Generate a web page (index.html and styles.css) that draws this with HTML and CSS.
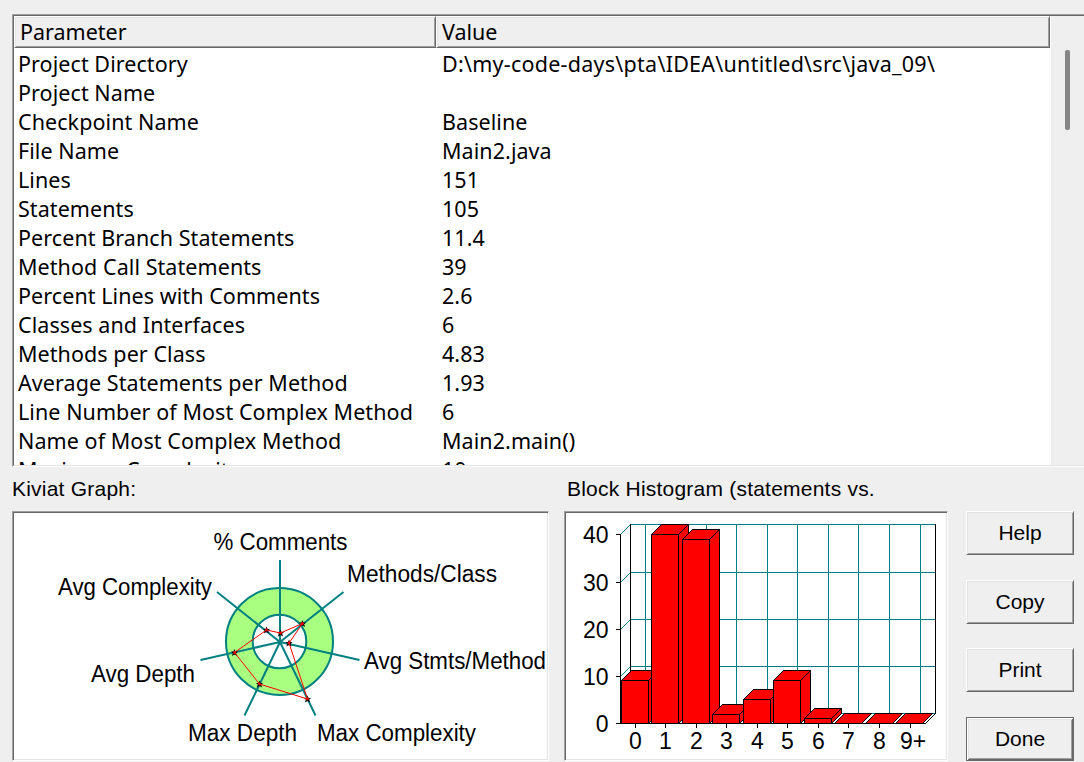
FILE: index.html
```
<!DOCTYPE html>
<html lang="en">
<head>
    <meta charset="UTF-8">
    <meta name="viewport" content="width=device-width, initial-scale=1.0">
    <title>Metrics Details</title>
    <link rel="stylesheet" href="styles.css">
</head>
<body>
    <div class="list">
        <div class="list-main">
            <div class="list-header">
                <div class="header-cell">Parameter</div>
                <div class="header-cell">Value</div>
            </div>
            <div class="rows">
                <div class="row"><span>Project Directory</span><span class="path">D:\my-code-days\pta\IDEA\untitled\src\java_09\</span></div>
                <div class="row"><span>Project Name</span><span></span></div>
                <div class="row"><span>Checkpoint Name</span><span>Baseline</span></div>
                <div class="row"><span>File Name</span><span>Main2.java</span></div>
                <div class="row"><span>Lines</span><span>151</span></div>
                <div class="row"><span>Statements</span><span>105</span></div>
                <div class="row"><span>Percent Branch Statements</span><span>11.4</span></div>
                <div class="row"><span>Method Call Statements</span><span>39</span></div>
                <div class="row"><span>Percent Lines with Comments</span><span>2.6</span></div>
                <div class="row"><span>Classes and Interfaces</span><span>6</span></div>
                <div class="row"><span>Methods per Class</span><span>4.83</span></div>
                <div class="row"><span>Average Statements per Method</span><span>1.93</span></div>
                <div class="row"><span>Line Number of Most Complex Method</span><span>6</span></div>
                <div class="row"><span>Name of Most Complex Method</span><span>Main2.main()</span></div>
                <div class="row"><span>Maximum Complexity</span><span>10</span></div>
            </div>
        </div>
        <div class="scrollbar"><div class="thumb"></div></div>
    </div>

    <div class="bottom">
        <div class="kiviat">
            <div class="label">Kiviat Graph:</div>
            <div class="panel">
                <svg viewBox="14 513 533 246" width="533" height="246">
                    <!-- target band -->
                    <circle class="band" cx="279.5" cy="641.5" r="53.5"/>
                    <circle class="hole" cx="279.5" cy="641.5" r="26.8"/>
                    <path class="spokes" d="M280 642V560M280 642L343.5 592M280 642L359.5 660M280 642L315.5 715.5M280 642L244.5 715.5M280 642L200.5 660M280 642L217 592"/>
                    <defs>
                        <g id="star">
                            <path d="M0 -3.5L1 -1H3.5L1.6 .8L2.7 3.5L0 2L-2.7 3.5L-1.6 .8L-3.5 -1H-1Z" fill="#000"/>
                            <circle r="1.4" fill="#e00000"/>
                        </g>
                    </defs>
                    <use href="#star" x="280.5" y="633"/>
                    <use href="#star" x="302.5" y="623.5"/>
                    <use href="#star" x="289" y="643"/>
                    <use href="#star" x="307.5" y="699"/>
                    <use href="#star" x="259.5" y="684"/>
                    <use href="#star" x="234.5" y="652.5"/>
                    <use href="#star" x="266.5" y="630"/>
                    <path class="values" d="M280.5 633L302.5 623.5L289 643L307.5 699L259.5 684L234.5 652.5L266.5 630Z"/>
                    <text x="213.5" y="550" textLength="134" lengthAdjust="spacingAndGlyphs">% Comments</text>
                    <text x="347" y="582" textLength="150" lengthAdjust="spacingAndGlyphs">Methods/Class</text>
                    <text x="364" y="669" textLength="182" lengthAdjust="spacingAndGlyphs">Avg Stmts/Method</text>
                    <text x="317" y="741" textLength="159" lengthAdjust="spacingAndGlyphs">Max Complexity</text>
                    <text x="188" y="741" textLength="109" lengthAdjust="spacingAndGlyphs">Max Depth</text>
                    <text x="91" y="682" textLength="104" lengthAdjust="spacingAndGlyphs">Avg Depth</text>
                    <text x="58" y="595" textLength="154" lengthAdjust="spacingAndGlyphs">Avg Complexity</text>
                </svg>
            </div>
        </div>

        <div class="histogram">
            <div class="label">Block Histogram (statements vs.</div>
            <div class="panel">
                <svg viewBox="566 513 379 246" width="379" height="246">
                    <g class="grid">
                        <path d="M630.5 524.5H935M630.5 572.5H935M630.5 619.5H935M630.5 666.5H935M630.5 713.5H935"/>
                        <path d="M645.5 524V713M676.5 524V713M706.5 524V713M736.5 524V713M767.5 524V713M797.5 524V713M828.5 524V713M858.5 524V713M889.5 524V713M920.5 524V713"/>
                        <path d="M620.5 534.5l10 -10M620.5 582.5l10 -10M620.5 629.5l10 -10M620.5 676.5l10 -10"/>
                    </g>
                    <path class="axis" d="M620.5 534V724M630.5 524V713M935.5 524V714M925.5 723.5L935.5 713.5"/>
                    <!-- one block per nesting depth -->
                    <g class="blocks">
                        <path d="M621.5 723.5V680.5l10 -10h27V713.5l-10 10zM658.5 670.5l-10 10h-27M648.5 680.5V723.5"/>
                        <path d="M651.5 723.5V534.5l10 -10h27V713.5l-10 10zM688.5 524.5l-10 10h-27M678.5 534.5V723.5"/>
                        <path d="M682.5 723.5V539.5l10 -10h27V713.5l-10 10zM719.5 529.5l-10 10h-27M709.5 539.5V723.5"/>
                        <path d="M712.5 723.5V714.5l10 -10h27V713.5l-10 10zM749.5 704.5l-10 10h-27M739.5 714.5V723.5"/>
                        <path d="M743.5 723.5V699.5l10 -10h27V713.5l-10 10zM780.5 689.5l-10 10h-27M770.5 699.5V723.5"/>
                        <path d="M773.5 723.5V680.5l10 -10h27V713.5l-10 10zM810.5 670.5l-10 10h-27M800.5 680.5V723.5"/>
                        <path d="M804.5 723.5V718.5l10 -10h27V713.5l-10 10zM841.5 708.5l-10 10h-27M831.5 718.5V723.5"/>
                        <path d="M834.5 723.5l10 -10h27l-10 10z"/>
                        <path d="M865.5 723.5l10 -10h27l-10 10z"/>
                        <path d="M895.5 723.5l10 -10h27l-10 10z"/>
                    </g>
                    <path class="axis" d="M616 723.5H926M616 534.5H621M616 582.5H621M616 629.5H621M616 676.5H621"/>
                    <path class="axis" d="M635.5 724v4M665.5 724v4M696.5 724v4M726.5 724v4M757.5 724v4M787.5 724v4M818.5 724v4M848.5 724v4M879.5 724v4M910.5 724v4"/>
                    <g class="ylabels">
                        <text x="608.5" y="543">40</text>
                        <text x="608.5" y="591">30</text>
                        <text x="608.5" y="638">20</text>
                        <text x="608.5" y="685">10</text>
                        <text x="608.5" y="732">0</text>
                    </g>
                    <g class="xlabels">
                        <text x="635.5" y="749">0</text>
                        <text x="665.5" y="749">1</text>
                        <text x="696.5" y="749">2</text>
                        <text x="726.5" y="749">3</text>
                        <text x="757.5" y="749">4</text>
                        <text x="787.5" y="749">5</text>
                        <text x="818.5" y="749">6</text>
                        <text x="848.5" y="749">7</text>
                        <text x="879.5" y="749">8</text>
                        <text x="913" y="749">9+</text>
                    </g>
                </svg>
            </div>
        </div>

        <div class="buttons">
            <button>Help</button>
            <button>Copy</button>
            <button>Print</button>
            <button class="default">Done</button>
        </div>
    </div>
</body>
</html>
```
FILE: styles.css
```
* {
    box-sizing: border-box;
    margin: 0;
    padding: 0;
}

body {
    width: 1084px;
    height: 762px;
    padding-top: 14px;
    padding-left: 12px;
    overflow: hidden;
    background-color: #efefef;
    color: #000;
    font-family: "Liberation Sans", Arial, sans-serif;
    font-size: 21px;
}

/* Parameter list */
.list {
    display: flex;
    height: 453px;
    border-top: 1px solid #a0a0a0;
    border-left: 1px solid #a0a0a0;
    border-bottom: 1px solid #fff;
    font-family: "Noto Sans", sans-serif;
    font-size: 21.5px;
}

.list-main {
    width: 1038px;
    border-top: 1px solid #696969;
    border-left: 1px solid #696969;
    border-bottom: 1px solid #e3e3e3;
    background-color: #fff;
    overflow: hidden;
}

.list-header {
    display: grid;
    grid-template-columns: 422px 614px;
    height: 32px;
}

.header-cell {
    padding-left: 5px;
    line-height: 30px;
    background-color: #efefef;
    border: 1px solid #fff;
    border-right-color: #696969;
    border-bottom-color: #696969;
    box-shadow: inset 1px 1px #e3e3e3, inset -1px -1px #a0a0a0;
}

.rows {
    padding-top: 1px;
}

.row {
    display: grid;
    grid-template-columns: 424px 1fr;
    height: 29px;
    line-height: 29px;
    padding-left: 4px;
    white-space: nowrap;
    letter-spacing: 0.07px;
}

.path {
    letter-spacing: 0.25px;
}

.scrollbar {
    flex: 1;
    padding: 34px 0 0 14px;
    border-top: 1px solid #696969;
    border-bottom: 1px solid #e3e3e3;
}

.thumb {
    width: 5px;
    height: 80px;
    border-radius: 2px;
    background-color: #858585;
}

/* Graphs and buttons */
.bottom {
    display: flex;
}

.kiviat {
    width: 537px;
    margin-right: 15px;
}

.histogram {
    width: 384px;
    margin-right: 18px;
}

.label {
    height: 44px;
    line-height: 44px;
    white-space: nowrap;
    letter-spacing: 0.22px;
}

.histogram .label {
    padding-left: 3px;
}

.panel {
    height: 250px;
    border: 1px solid #a0a0a0;
    border-right-color: #fff;
    border-bottom-color: #fff;
    padding: 1px;
    background-color: #fff;
    box-shadow: inset 1px 1px #696969, inset -1px -1px #e3e3e3;
}

.panel svg {
    display: block;
}

.panel text {
    font-size: 23px;
}

.band {
    fill: #a8ff80;
    stroke: #008080;
    stroke-width: 2;
}

.hole {
    fill: #fff;
    stroke: #008080;
    stroke-width: 2;
}

.spokes {
    fill: none;
    stroke: #008080;
    stroke-width: 2;
}

.values {
    fill: none;
    stroke: #f00;
    stroke-width: 1;
}

.grid path {
    fill: none;
    stroke: #008080;
    shape-rendering: crispEdges;
}

.axis {
    fill: none;
    stroke: #000;
    shape-rendering: crispEdges;
}

.blocks path {
    fill: #f00;
    stroke: #000;
    shape-rendering: crispEdges;
}

.ylabels {
    text-anchor: end;
}

.xlabels {
    text-anchor: middle;
}

.buttons {
    display: flex;
    flex-direction: column;
    gap: 25px;
    width: 108px;
    padding-top: 44px;
}

.buttons button {
    height: 44px;
    font: inherit;
    color: #000;
    background-color: #efefef;
    border: 1px solid #fff;
    border-right-color: #696969;
    border-bottom-color: #696969;
    box-shadow: inset 1px 1px #e3e3e3, inset -1px -1px #a0a0a0;
}

.buttons button:nth-child(3) {
    margin-top: -1px;
}

.buttons .default {
    border-color: #696969;
    box-shadow: inset 1px 1px #fff, inset -1px -1px #696969, inset 2px 2px #e3e3e3, inset -2px -2px #a0a0a0;
}
```
